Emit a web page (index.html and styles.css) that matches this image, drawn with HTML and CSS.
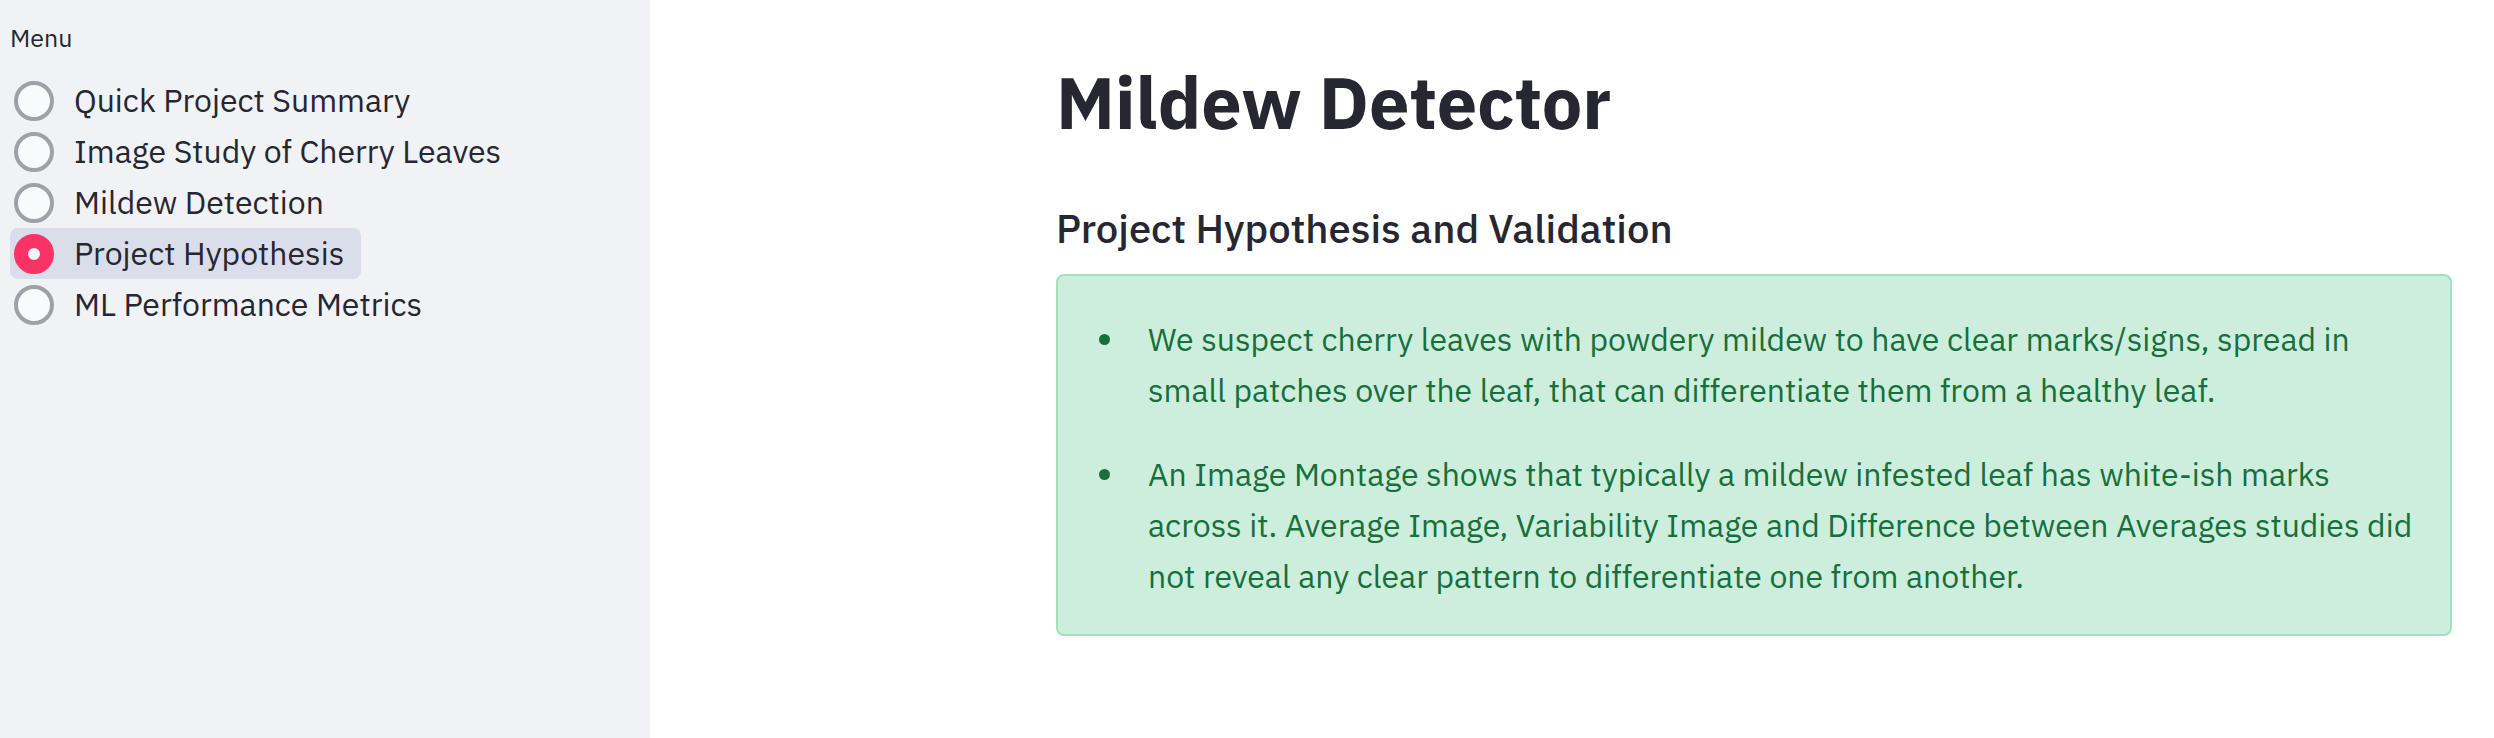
FILE: index.html
```html
<!DOCTYPE html>
<html lang="en">
<head>
<meta charset="utf-8">
<meta name="viewport" content="width=device-width, initial-scale=1">
<title>Mildew Detector</title>
<link rel="stylesheet" href="styles.css">
</head>
<body>
<div class="app">
  <aside class="sidebar">
    <fieldset class="menu">
      <legend class="menu-title">Menu</legend>
      <label class="option"><input type="radio" name="page" class="radio"><span>Quick Project Summary</span></label>
      <label class="option"><input type="radio" name="page" class="radio"><span>Image Study of Cherry Leaves</span></label>
      <label class="option"><input type="radio" name="page" class="radio"><span>Mildew Detection</span></label>
      <label class="option"><input type="radio" name="page" class="radio" checked><span>Project Hypothesis</span></label>
      <label class="option"><input type="radio" name="page" class="radio"><span>ML Performance Metrics</span></label>
    </fieldset>
  </aside>
  <main class="content">
    <h1 class="title">Mildew Detector</h1>
    <h3 class="subtitle">Project Hypothesis and Validation</h3>
    <div class="alert" role="alert">
      <ul class="findings">
        <li>We suspect cherry leaves with powdery mildew to have clear marks/signs, spread in small patches over the leaf, that can differentiate them from a healthy leaf.</li>
        <li>An Image Montage shows that typically a mildew infested leaf has white-ish marks across it. Average Image, Variability Image and Difference between Averages studies did not reveal any clear pattern to differentiate one from another.</li>
      </ul>
    </div>
  </main>
</div>
</body>
</html>
```
FILE: styles.css
```css
* {
  box-sizing: border-box;
}

body {
  margin: 0;
  background: #ffffff;
  color: #262730;
  font-family: "IBM Plex Sans", "Liberation Sans", sans-serif;
  font-size: 32px;
  line-height: 51px;
}

.app {
  display: flex;
  min-height: 100vh;
}

.sidebar {
  flex: 0 0 650px;
  padding: 18px 10px;
  background: #f0f2f6;
}

.menu {
  display: flex;
  flex-direction: column;
  align-items: flex-start;
  margin: 0;
  padding: 0;
  border: 0;
}

.menu-title {
  margin-bottom: 18px;
  padding: 0;
  font-size: 25px;
  line-height: 39px;
}

.option {
  display: flex;
  align-items: center;
  gap: 20px;
  padding: 0 17px 0 4px;
  border-radius: 8px;
}

.option:has(:checked) {
  background: #dadeea;
}

.radio {
  appearance: none;
  flex: none;
  width: 40px;
  height: 40px;
  margin: 0;
  border: 4px solid #a0a1a7;
  border-radius: 50%;
  background: #f9fafc;
}

.radio:checked {
  border: 14px solid #f93365;
  background: #f0f2f6;
}

.content {
  flex: 1;
  min-width: 0;
  padding: 58px 42px 40px 406px;
}

.title {
  margin: 0 0 55px;
  font-size: 72px;
  font-weight: 700;
  line-height: 88px;
}

.subtitle {
  margin: 0 0 19px;
  font-size: 40px;
  font-weight: 500;
  line-height: 54px;
}

.alert {
  padding: 38px 30px 32px;
  border: 2px solid #a3e1bd;
  border-radius: 8px;
  background: #cdeedc;
  color: #176f3d;
}

.findings {
  display: flex;
  flex-direction: column;
  gap: 33px;
  margin: 0;
  padding: 0 0 0 40px;
}

.findings li {
  padding-left: 20px;
}
```
